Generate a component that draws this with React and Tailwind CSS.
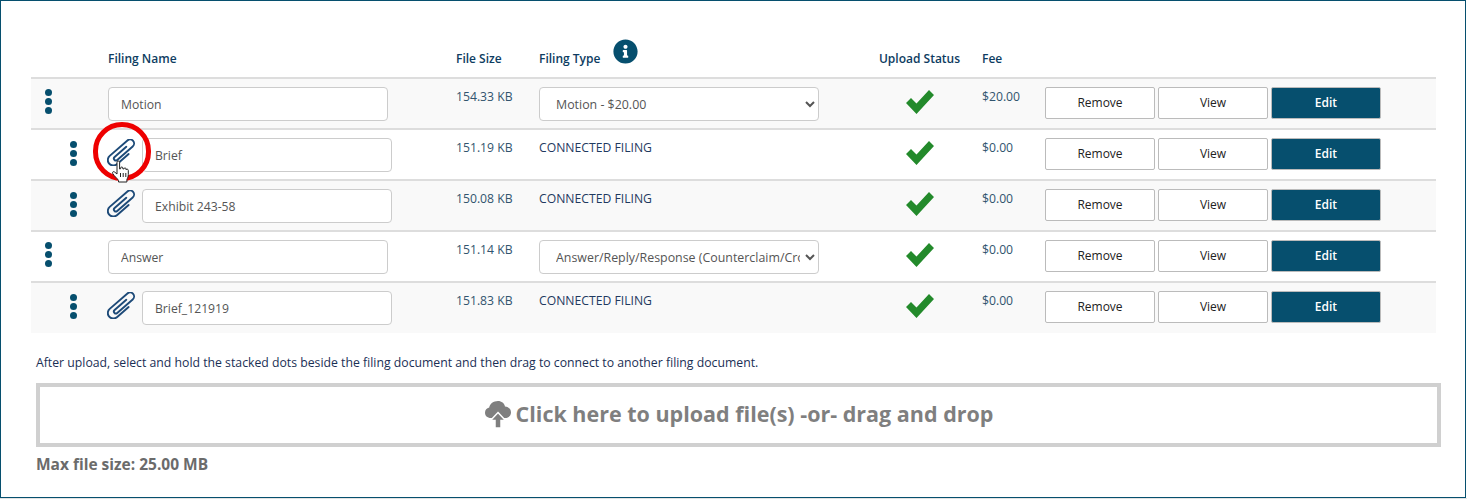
import { FaInfoCircle } from 'react-icons/fa';

const rows = [
  { name: 'Motion', size: '154.33 KB', type: 'Motion - $20.00', fee: '$20.00' },
  { name: 'Brief', size: '151.19 KB', fee: '$0.00', connected: true, marked: true },
  { name: 'Exhibit 243-58', size: '150.08 KB', fee: '$0.00', connected: true },
  { name: 'Answer', size: '151.14 KB', type: 'Answer/Reply/Response (Counterclaim/Crossclaim) - $0.00', fee: '$0.00' },
  { name: 'Brief_121919', size: '151.83 KB', fee: '$0.00', connected: true },
];

function Dots() {
  return (
    <div className="flex flex-col gap-[2px] w-[7px]">
      <span className="w-[7px] h-[7px] rounded-full bg-[#064f6e]" />
      <span className="w-[7px] h-[7px] rounded-full bg-[#064f6e]" />
      <span className="w-[7px] h-[7px] rounded-full bg-[#064f6e]" />
    </div>
  );
}

function Clip() {
  return (
    <svg width="30" height="27" viewBox="-15 -13.5 30 27" fill="none">
      <g transform="rotate(-41)">
        <path
          d="M4 5.500H-11.500A5.500 5.500 0 0 1 -11.500 -5.500H12A4 4 0 0 1 12 2.500H-8.500A2 2 0 0 1 -8.500 -1.500H7"
          stroke="#1d4a78"
          strokeWidth="1.900"
          strokeLinecap="round"
        />
      </g>
    </svg>
  );
}

function Check() {
  return (
    <svg width="28" height="24" viewBox="0 0 28 24">
      <path d="M0 13L5 8L10.500 13.500L23 0L28 5L10.500 24Z" fill="#238a2b" />
    </svg>
  );
}

function Cursor() {
  return (
    <svg width="20" height="24" viewBox="0 0 20 24" className="absolute left-[80px] top-[30px]">
      <path
        d="M6 2.200c0-1.600 2.600-1.600 2.600 0V9l1-.2V8c0-1.300 2.300-1.300 2.300 0v1l1-.1c0-1.300 2.200-1.300 2.200 0v1c.3-1 2.200-1 2.200.4v4.200c0 2.400-.8 3.400-1.400 5V22H7.500v-1.600C6 18 3.500 16.500 1.700 13.500c-.8-1.400.8-2.500 2-1.400L6 14Z"
        fill="#fff"
        stroke="#222"
        strokeWidth="1"
        strokeLinejoin="round"
      />
      <path d="M9.500 13v4M12.200 13v4M14.800 13v4" stroke="#222" strokeWidth="1" />
    </svg>
  );
}

function FilingRow({ row, idx }) {
  return (
    <div className={`flex border-t-2 border-[#dddddd] ${idx === rows.length - 1 ? 'h-[52px]' : 'h-[51px]'} ${idx % 2 === 0 ? 'bg-[#f9f9f9]' : 'bg-white'}`}>
      <div className="relative w-[425px] shrink-0 flex pt-[8px]">
        {row.connected ? (
          <>
            <div className="ml-[38.500px] mt-[3px]"><Dots /></div>
            <div className="ml-[30.500px] mt-[1px] w-[35px]"><Clip /></div>
            <input
              readOnly
              value={row.name}
              className="w-[250px] h-[34px] rounded border border-[#cccccc] bg-white px-3 text-[12.2px] text-[#555555] outline-none"
            />
          </>
        ) : (
          <>
            <div className="ml-[13.500px] mt-[2px]"><Dots /></div>
            <input
              readOnly
              value={row.name}
              className="ml-[56.500px] w-[280px] h-[34px] rounded border border-[#cccccc] bg-white px-3 text-[12.2px] text-[#555555] outline-none"
            />
          </>
        )}
        {row.marked && (
          <>
            <span className="absolute left-[62px] top-[-8px] w-[58px] h-[59px] rounded-full border-[5px] border-[#ee0000]" />
            <Cursor />
          </>
        )}
      </div>
      <div className="w-[83px] shrink-0 pt-[9px] text-[12.2px] leading-[18px] text-[#32546e]">{row.size}</div>
      <div className="w-[320px] shrink-0">
        {row.type ? (
          <select className="mt-[8px] block w-[280px] h-[34px] rounded border border-[#cccccc] bg-white pl-3 pr-[2px] text-[12.4px] text-[#555555] outline-none">
            <option>{row.type}</option>
          </select>
        ) : (
          <div className="pt-[9px] text-[12.2px] leading-[18px] text-[#1f3a5f]">CONNECTED FILING</div>
        )}
      </div>
      <div className="w-[123px] shrink-0 flex justify-center pt-[11px] pr-[1px]">
        <Check />
      </div>
      <div className="w-[63px] shrink-0 pt-[9px] text-[12.2px] leading-[18px] text-[#32546e]">{row.fee}</div>
      <div className="flex gap-[3px] pt-[8px]">
        <button className="w-[110px] h-[32px] rounded-[2px] border border-[#bbbbbb] bg-white text-[12px] text-[#222222]">Remove</button>
        <button className="w-[110px] h-[32px] rounded-[2px] border border-[#bbbbbb] bg-white text-[12px] text-[#222222]">View</button>
        <button className="w-[110px] h-[32px] rounded-[2px] border border-[#bbbbbb] bg-[#064f6e] text-[12px] font-semibold text-white">Edit</button>
      </div>
    </div>
  );
}

export default function App() {
  return (
    <div className="h-[499px] bg-white border-b border-[#e2e2e2] font-['Open_Sans',sans-serif] overflow-hidden">
      <div className="h-[498px] w-[1466px] bg-white border border-[#064f6e] pl-[30px] pr-[29px]">
        {/* header */}
        <div className="flex h-[76px] text-[12px] font-semibold text-[#0d3c61]">
          <div className="w-[425px] shrink-0 pl-[77px] pt-[49px]">Filing Name</div>
          <div className="w-[83px] shrink-0 pt-[49px]">File Size</div>
          <div className="w-[320px] shrink-0 pt-[49px] flex">
            <span>Filing Type</span>
            <FaInfoCircle className="ml-[13px] mt-[-11px] w-[25px] h-[25px] text-[#064f6e]" />
          </div>
          <div className="w-[123px] shrink-0 pt-[49px] pr-[2px] text-center">Upload Status</div>
          <div className="w-[63px] shrink-0 pt-[49px]">Fee</div>
        </div>

        {rows.map((row, idx) => (
          <FilingRow key={idx} row={row} idx={idx} />
        ))}

        <p className="ml-[5px] mt-[21px] whitespace-nowrap text-[12.25px] leading-[18px] text-[#1a2f55]">
          After upload, select and hold the stacked dots beside the filing document and then drag to connect to another filing document.
        </p>

        <div className="ml-[5px] mt-[11px] w-[1405px] h-[64px] border-4 border-[#d0d0d0] flex items-center justify-center pb-[2px] text-[21.5px] font-bold text-[#7f7f7f]">
          <svg width="28" height="29" viewBox="0 0 28 29" className="mr-[4px]">
            <path
              d="M14 1c3.600 0 6.300 2.300 7 5.400 3.400.2 6 2.700 6 6 0 3.500-2.800 5.600-6 5.600H7C3 18 1 15.500 1 12.700c0-2.600 1.700-4.600 4.200-5.100C5.800 3.800 9.500 1 14 1Z"
              fill="#7f7f7f"
            />
            <path d="M14 12.500l7.500 8h-4.500v7.500h-6v-7.500H6.500Z" fill="#7f7f7f" stroke="#fff" strokeWidth="1.500" />
          </svg>
          <span>Click here to upload file(s) -or- drag and drop</span>
        </div>

        <p className="ml-[5px] mt-[7px] text-[15.5px] leading-[20px] font-bold text-[#6b6b6b]">Max file size: 25.00 MB</p>
      </div>
    </div>
  );
}
